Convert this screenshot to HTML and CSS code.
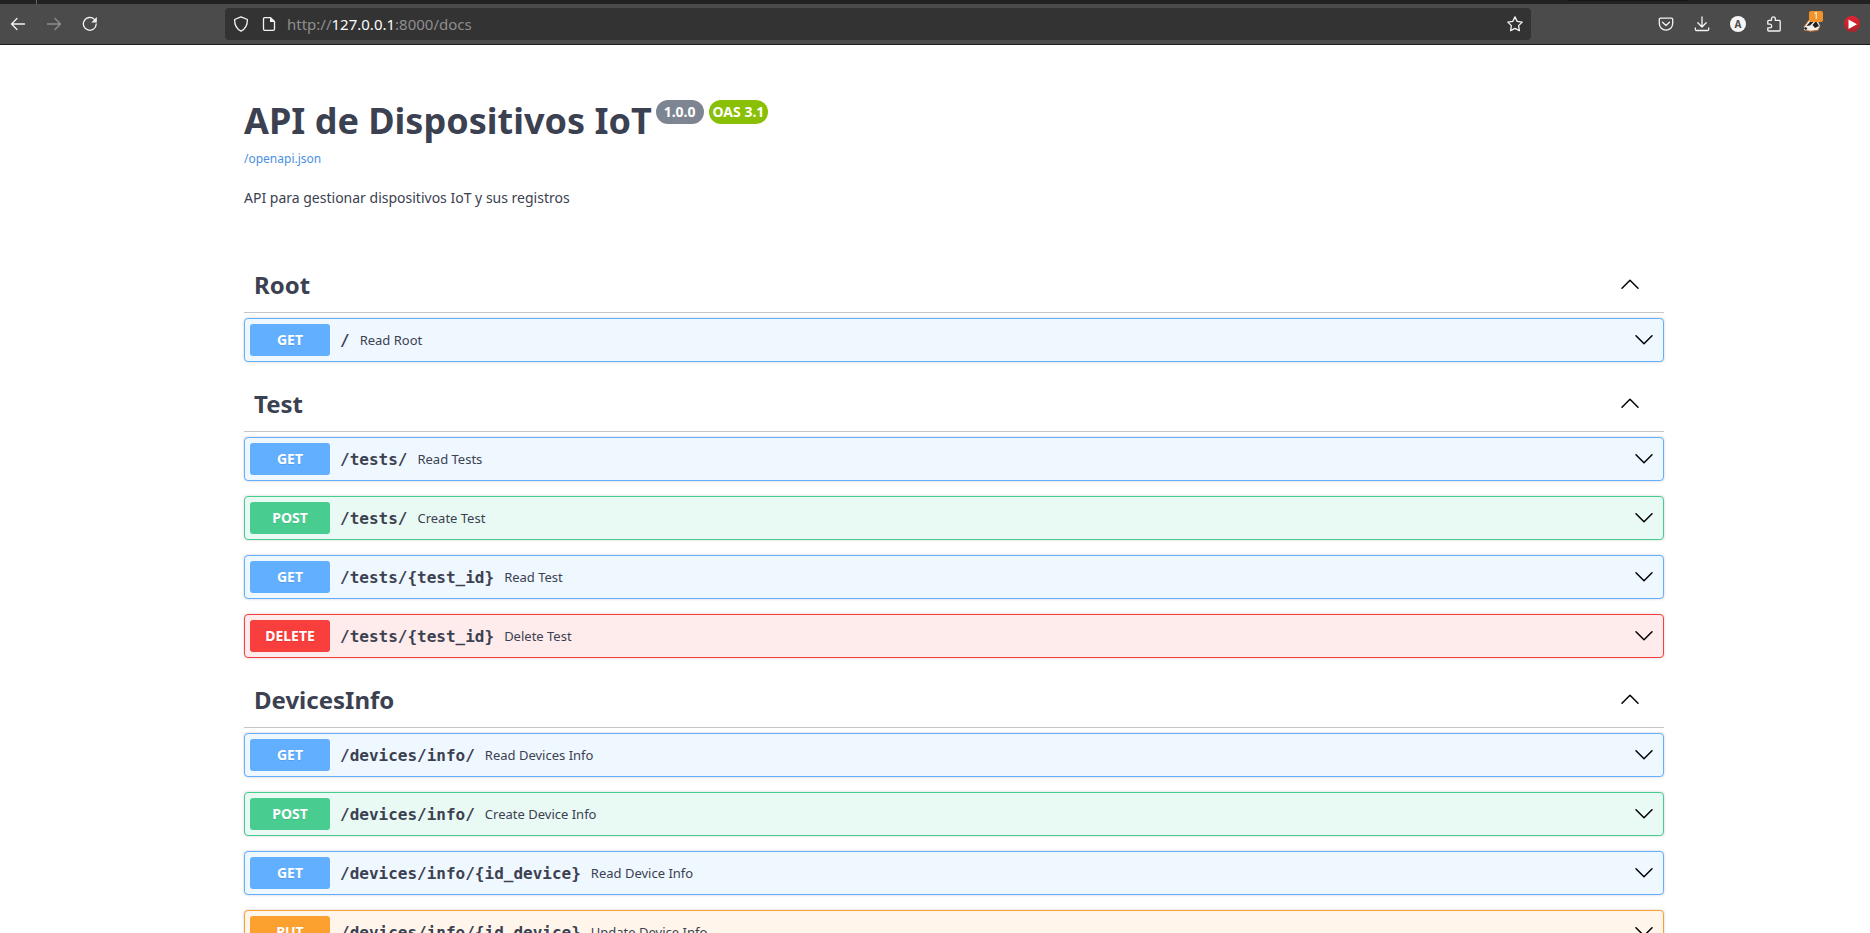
FILE: index.html
```html
<!DOCTYPE html>
<html lang="es">
<head>
<meta charset="utf-8">
<title>API de Dispositivos IoT</title>
<link rel="stylesheet" href="styles.css">
</head>
<body>
<header class="browser">
  <div class="tabstrip"><span class="tab-sep"></span><span class="tab-active"></span></div>
  <div class="toolbar">
    <nav class="nav">
      <svg class="ico" viewBox="0 0 16 16"><path d="M14.500 8H1.500M7 2.500L1.500 8 7 13.500"/></svg>
      <svg class="ico dim" viewBox="0 0 16 16"><path d="M1.500 8h13M9 2.500L14.500 8 9 13.500"/></svg>
      <svg class="ico" viewBox="0 0 16 16"><path d="M12.400 3.400A6.400 6.400 0 1 0 14.200 8"/><path class="fill" d="M14.800 1v5.500H9.300z"/></svg>
    </nav>
    <div class="urlbar">
      <svg class="ico" viewBox="0 0 16 16"><path d="M8 .8L14.400 3.500C14.500 9 12.500 12.900 8 15.200 3.500 12.900 1.500 9 1.600 3.500z"/></svg>
      <svg class="ico page" viewBox="0 0 16 16"><path d="M9.500 1.700H3.800Q2.500 1.700 2.500 3v10Q2.500 14.300 3.800 14.300h8.400q1.300 0 1.300-1.300V5.500z"/><path class="fill" d="M9 1.500V6h4.500z"/></svg>
      <span class="url">http://<b>127.0.0.1</b>:8000/docs</span>
      <svg class="ico star" viewBox="0 0 16 16"><path d="M8 .9l2.200 4.500 5 .7-3.600 3.500.8 5L8 12.300l-4.400 2.300.8-5L.8 6.100l5-.7z"/></svg>
    </div>
    <div class="tools">
      <svg class="ico" viewBox="0 0 16 16"><path d="M2.600 2.200h10.800q1.300 0 1.300 1.300V7.500a6.700 6.700 0 0 1-13.400 0V3.500q0-1.300 1.300-1.300zM4.500 6.300L8 9.500l3.500-3.200"/></svg>
      <svg class="ico" viewBox="0 0 16 16"><path d="M8 .8V11M3.800 6.800L8 11l4.200-4.200M1.300 12v1.200q0 1.300 1.300 1.300h10.800q1.300 0 1.300-1.300V12"/></svg>
      <span class="account">A</span>
      <svg class="ico" viewBox="0 0 16 16"><path d="M1.800 7.500V5.200q0-.9.900-.9H5.500V2.800a1.900 1.900 0 0 1 3.800 0v1.500h4q.9 0 .9.900v9q0 .8-.8.800H2.600q-.8 0-.8-.8V11.800h2a1.800 1.800 0 0 0 0-3.700H1.800z"/></svg>
      <span class="badger">
        <svg viewBox="0 0 18 16"><path fill="#f4efe9" d="M1 11L6 4l7-3 4 9-2 4-8 1-6-1z"/><path fill="#222" d="M3.500 10L9 3.500l3 1L7 9.500zM9.500 9L13 5l3 5-4 2zM.8 12l2.200-1 1.500 2-2 1z"/><path fill="none" stroke="#d9752f" stroke-width=".8" d="M.8 11L6 4M1.500 14.200q7 2.300 13.500 0l2-4"/></svg>
        <span class="count">1</span>
      </span>
      <svg class="play" viewBox="0 0 16 16"><defs><linearGradient id="red" x2="0" y2="1"><stop stop-color="#e62334"/><stop offset="1" stop-color="#a92228"/></linearGradient></defs><circle cx="8" cy="8" r="8" fill="url(#red)"/><path fill="#fff" d="M4.500 3.500v9.500L13 8.200z"/></svg>
    </div>
  </div>
</header>
<main class="docs">
  <section class="info">
    <h1>API de Dispositivos IoT<span class="pill">1.0.0</span><span class="pill oas">OAS 3.1</span></h1>
    <a class="spec">/openapi.json</a>
    <p>API para gestionar dispositivos IoT y sus registros</p>
  </section>

  <h2 class="tag">Root<svg class="chev" viewBox="0 0 20 20"><path d="M2 14.200L10 6.200l8 8"/></svg></h2>
  <div class="op get"><span class="method">GET</span><code>/</code><span class="desc">Read Root</span><svg class="chev" viewBox="0 0 20 20"><path d="M2 5.800l8 8 8-8"/></svg></div>

  <h2 class="tag">Test<svg class="chev" viewBox="0 0 20 20"><path d="M2 14.200L10 6.200l8 8"/></svg></h2>
  <div class="op get"><span class="method">GET</span><code>/tests/</code><span class="desc">Read Tests</span><svg class="chev" viewBox="0 0 20 20"><path d="M2 5.800l8 8 8-8"/></svg></div>
  <div class="op post"><span class="method">POST</span><code>/tests/</code><span class="desc">Create Test</span><svg class="chev" viewBox="0 0 20 20"><path d="M2 5.800l8 8 8-8"/></svg></div>
  <div class="op get"><span class="method">GET</span><code>/tests/{test_id}</code><span class="desc">Read Test</span><svg class="chev" viewBox="0 0 20 20"><path d="M2 5.800l8 8 8-8"/></svg></div>
  <div class="op delete"><span class="method">DELETE</span><code>/tests/{test_id}</code><span class="desc">Delete Test</span><svg class="chev" viewBox="0 0 20 20"><path d="M2 5.800l8 8 8-8"/></svg></div>

  <h2 class="tag">DevicesInfo<svg class="chev" viewBox="0 0 20 20"><path d="M2 14.200L10 6.200l8 8"/></svg></h2>
  <div class="op get"><span class="method">GET</span><code>/devices/info/</code><span class="desc">Read Devices Info</span><svg class="chev" viewBox="0 0 20 20"><path d="M2 5.800l8 8 8-8"/></svg></div>
  <div class="op post"><span class="method">POST</span><code>/devices/info/</code><span class="desc">Create Device Info</span><svg class="chev" viewBox="0 0 20 20"><path d="M2 5.800l8 8 8-8"/></svg></div>
  <div class="op get"><span class="method">GET</span><code>/devices/info/{id_device}</code><span class="desc">Read Device Info</span><svg class="chev" viewBox="0 0 20 20"><path d="M2 5.800l8 8 8-8"/></svg></div>
  <div class="op put"><span class="method">PUT</span><code>/devices/info/{id_device}</code><span class="desc">Update Device Info</span><svg class="chev" viewBox="0 0 20 20"><path d="M2 5.800l8 8 8-8"/></svg></div>
</main>
</body>
</html>
```
FILE: styles.css
```css
* { box-sizing: border-box; }
body {
  margin: 0;
  height: 933px;
  overflow: hidden;
  background: #fff;
  color: #3b4151;
  font-family: "Noto Sans", sans-serif;
}

/* Browser chrome */
.browser { height: 45px; background: #4b4b4b; border-bottom: 1px solid #1c1c1c; }
.tabstrip { display: flex; height: 4px; background: #222; }
.tab-sep { width: 1px; margin-left: 36px; background: #666; }
.tab-active { width: 120px; height: 1px; margin-left: 1531px; background: #151515; }
.toolbar { display: flex; align-items: center; height: 40px; }
.nav { display: flex; gap: 20px; width: 225px; padding-left: 10px; }
.ico { flex: none; width: 16px; height: 16px; fill: none; stroke: #f4f4f4; stroke-width: 1.3; stroke-linejoin: round; stroke-linecap: round; }
.ico .fill { fill: #f4f4f4; stroke: none; }
.dim { opacity: .4; }
.urlbar { display: flex; align-items: center; width: 1306px; height: 32px; padding: 0 8px; border-radius: 4px; background: #333; }
.page { margin-left: 12px; }
.url { margin-left: 10px; padding-bottom: 1px; color: #8e8e8e; font-size: 15px; line-height: 20px; }
.url b { color: #fbfbfe; font-weight: 400; }
.star { margin-left: auto; }
.tools { display: flex; align-items: center; gap: 20px; margin-left: 127px; }
.account { width: 16px; height: 16px; border-radius: 50%; background: #f6f6f6; color: #4b4b4b; font: 700 10px/16px "Noto Sans", sans-serif; text-align: center; }
.badger { position: relative; width: 18px; height: 16px; margin-left: 1px; }
.badger svg { display: block; width: 18px; height: 16px; }
.count { position: absolute; left: 6px; top: -5px; width: 14px; height: 11px; border-radius: 2px; background: #f0932b; color: #fff; font-size: 9px; line-height: 10px; text-align: center; }
.play { width: 16px; height: 16px; margin-left: 3px; }

/* API docs */
.docs { width: 1420px; margin-left: 244px; }
.info { height: 213px; padding-top: 50px; }
.info h1 { display: flex; height: 50px; margin: 0; font-size: 36px; line-height: 52px; font-weight: 700; }
.pill { height: 24px; margin: 5px 0 0 4px; padding: 0 8px; border-radius: 57px; background: #7d8492; color: #fff; font-size: 14px; line-height: 24px; }
.oas { margin-left: 5px; padding: 0 4px; background: #89bf04; }
.spec { display: block; margin-top: 5px; color: #4990e2; font-size: 12px; line-height: 17px; }
.info p { margin: 21px 0 0; font-size: 14px; line-height: 20px; }
.tag { display: flex; align-items: center; height: 55px; margin: 0 0 5px; padding: 0 24px 0 10px; border-bottom: 1px solid rgba(59, 65, 81, .3); font-size: 24px; line-height: 34px; font-weight: 700; }
.chev { flex: none; width: 20px; height: 20px; margin-left: auto; fill: none; stroke: #000; stroke-width: 1.5; stroke-linecap: round; stroke-linejoin: round; }
.tag .chev { margin-bottom: 2px; }
.op { display: flex; align-items: center; height: 44px; margin-bottom: 15px; padding: 0 9px 0 5px; border: 1px solid; border-radius: 4px; box-shadow: 0 0 3px rgba(0, 0, 0, .19); }
.method { width: 80px; height: 32px; border-radius: 3px; color: #fff; font-size: 14px; line-height: 32px; font-weight: 700; text-align: center; text-shadow: 0 1px 0 rgba(0, 0, 0, .1); }
.op code { margin: 0 10px; padding-top: 2px; color: #3b4151; font: 600 16px/22px "DejaVu Sans Mono", monospace; }
.desc { color: #3b4151; font-size: 13px; line-height: 18px; }
.get { border-color: #61affe; background: #eff7ff; }
.get .method { background: #61affe; }
.post { border-color: #49cc90; background: #e9f9f3; }
.post .method { background: #49cc90; }
.delete { border-color: #f93e3e; background: #feebeb; }
.delete .method { background: #f93e3e; }
.put { border-color: #fca130; background: #fff5ea; }
.put .method { background: #fca130; }
```
